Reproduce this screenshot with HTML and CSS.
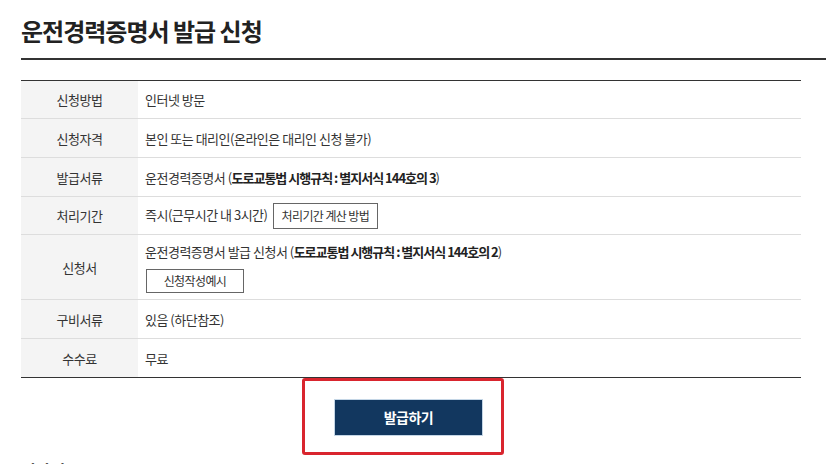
FILE: index.html
```html
<!DOCTYPE html>
<html>
	<head>
		<meta charset="UTF-8">
		<title>운전경력증명서 발급 신청</title>
		<link rel="stylesheet" href="styles.css">
	</head>
	<body>
		<div class="page">
			<h1 class="tit">운전경력증명서 발급 신청</h1>
			<div class="inner">
				<table class="info">
					<tr class="short">
						<th>신청방법</th>
						<td>인터넷 방문</td>
					</tr>
					<tr>
						<th>신청자격</th>
						<td>본인 또는 대리인(온라인은 대리인 신청 불가)</td>
					</tr>
					<tr>
						<th>발급서류</th>
						<td>운전경력증명서 (<b>도로교통법 시행규칙 : 별지서식 144호의 3</b>)</td>
					</tr>
					<tr class="short">
						<th>처리기간</th>
						<td>즉시(근무시간 내 3시간) <a href="javascript:;" class="btn-line">처리기간 계산 방법</a></td>
					</tr>
					<tr class="tall">
						<th>신청서</th>
						<td>
							<p>운전경력증명서 발급 신청서 (<b>도로교통법 시행규칙 : 별지서식 144호의 2</b>)</p>
							<a href="javascript:;" class="btn-line wide">신청작성예시</a>
						</td>
					</tr>
					<tr>
						<th>구비서류</th>
						<td>있음 (하단참조)</td>
					</tr>
					<tr>
						<th>수수료</th>
						<td>무료</td>
					</tr>
				</table>
				<div class="mark">
					<a href="javascript:;" class="btn-issue">발급하기</a>
				</div>
				<h2 class="sub">기타정보</h2>
			</div>
		</div>
	</body>
</html>
```

FILE: styles.css
```css
*{padding:0;margin:0;box-sizing:border-box;}
body{background:#fff;font-family:"Noto Sans CJK KR","Noto Sans",sans-serif;color:#333;overflow:hidden;}
a{text-decoration:none;color:inherit;}
.page{padding-left:21px;}
.tit{font-size:24px;line-height:34px;font-weight:700;color:#222;padding-top:14px;padding-bottom:10px;border-bottom:2px solid #333;letter-spacing:-1px;}
.inner{width:780px;padding-top:20px;}
.info{width:780px;border-collapse:collapse;border-top:1px solid #333;border-bottom:1px solid #333;font-size:13px;letter-spacing:-0.5px;}
.info th{width:117px;background:#f4f4f4;font-weight:400;text-align:center;height:39px;border-bottom:1px solid #ddd;}
.info td{padding-left:7px;height:39px;border-bottom:1px solid #ddd;}
.info .short th,.info .short td{height:38px;}
.info tr:last-child th,.info tr:last-child td{border-bottom:0;}
.info .tall th,.info .tall td{height:65px;}
.info .tall td{vertical-align:top;padding-top:7px;}
.info .tall p{line-height:19px;}
.info b{font-weight:700;color:#222;letter-spacing:-1px;}
.btn-line{display:inline-block;vertical-align:middle;width:105px;height:26px;line-height:24px;border:1px solid #666;font-size:12px;text-align:center;margin-left:3px;letter-spacing:-0.6px;}
.btn-line.wide{width:98px;margin:8px 0 0 1px;height:24px;line-height:22px;}
.mark{width:202px;margin-left:281px;border:3px solid #d9252e;border-radius:3px;padding:18px 0 16px 29px;}
.btn-issue{display:block;width:149px;height:37px;line-height:35px;background:#12375f;border:1px solid #c4d6e6;color:#fff;font-size:14px;font-weight:700;text-align:center;letter-spacing:-0.5px;}
.sub{font-size:16px;font-weight:700;color:#222;margin-top:3px;}
```
